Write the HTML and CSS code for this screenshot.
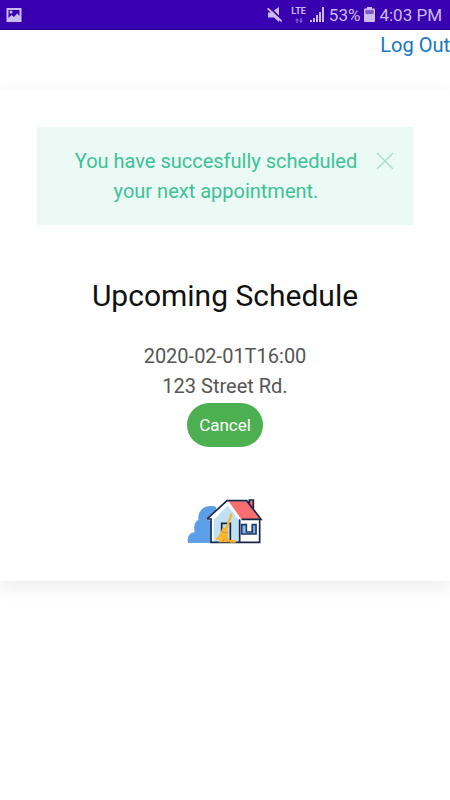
FILE: index.html
```html
<!DOCTYPE html>
<html lang="en">
<head>
<meta charset="utf-8">
<meta name="viewport" content="width=device-width, initial-scale=1">
<title>Upcoming Schedule</title>
<link rel="stylesheet" href="styles.css">
</head>
<body>
<header class="status">
  <svg class="status-photo" width="16" height="16" viewBox="0 0 16 16" aria-hidden="true">
    <path fill="currentColor" fill-rule="evenodd" d="M1 1h14q.5 0 .5.500v13q0 .5-.5.500H1q-.5 0-.5-.5v-13Q.5 1 1 1zM2.500 3v8l3-3 2.500 2 3.200-3.500L13.500 9V3z"/>
    <circle cx="5" cy="5" r="1.500" fill="currentColor"/>
  </svg>
  <div class="status-info">
    <svg width="16" height="16" viewBox="0 0 16 16" aria-hidden="true">
      <path fill="currentColor" d="M1 5.500h3l1.500-1.200L12 11v4l-5-4.500H1zM7 3.500 12 0v8.500zM1.300.7 15.300 13.700l-1.200 1.300L0 2z"/>
    </svg>
    <span class="network">
      <span class="lte">LTE</span>
      <svg class="arrows" width="8" height="5" viewBox="0 0 8 5" aria-hidden="true"><path fill="currentColor" d="M1.500 5V2.500H0L2 0l2 2.500H2.800V5zM5.300 0v2.500H4L6 5l2-2.500H6.700V0z"/></svg>
    </span>
    <svg class="signal" width="15" height="15" viewBox="0 0 15 15" aria-hidden="true">
      <path fill="currentColor" d="M0 13h2v2H0zM3 11h2v4H3zM6 8h2v7H6zM9 5h2v10H9zM12 0h2v15h-2z"/>
    </svg>
    <span class="percent">53%</span>
    <svg class="battery" width="11" height="15" viewBox="0 0 11 15" aria-hidden="true">
      <path fill="currentColor" d="M3 0h5v1.500h2q1 0 1 1V14q0 1-1 1H1q-1 0-1-1V2.500q0-1 1-1h2z"/>
      <path fill="#7b57cc" d="M1.500 3h8v4h-8z"/>
    </svg>
    <span class="time">4:03 PM</span>
  </div>
</header>
<nav class="topnav"><a href="#">Log Out</a></nav>
<main class="card">
  <div class="alert" role="alert">
    <p>You have succesfully scheduled your next appointment.</p>
    <button class="close" type="button" aria-label="Close">
      <svg width="18" height="18" viewBox="0 0 18 18" fill="none" stroke="currentColor" stroke-width="1.400" aria-hidden="true"><path d="M1 1l16 16M17 1 1 17"/></svg>
    </button>
  </div>
  <h1>Upcoming Schedule</h1>
  <div class="appointment">
    <p>2020-02-01T16:00</p>
    <p>123 Street Rd.</p>
    <button class="cancel" type="button">Cancel</button>
  </div>
  <svg class="logo" width="76" height="46" viewBox="22 24 228 138" aria-hidden="true">
    <path fill="#5b9fe8" d="M25 158c-3-18 8-30 25-29-6-20 4-36 20-37l-14-6c-2-22 16-44 51-36l6 14-19 30v64z"/>
    <path fill="#5b9fe8" d="M25 158c-3-18 6-31 20-31-4-20 2-34 12-38 0-12 8-17 18-16 2-18 16-27 34-22l-5 107z"/>
    <path fill="#fff" d="M80 88 92 92v66h148V90l8-4-34-56h-72z"/>
    <path fill="#bfdff3" d="m144 42-42 47v67h76V88z"/>
    <path fill="#f96f6f" d="M147 34h53l42 54h-57z"/>
    <path fill="#f96f6f" d="M210 32h10v29l-10-12z"/>
    <g fill="none" stroke="#182448" stroke-width="5">
      <path d="m82 87 60-55h59l43 56h-58M82 87h12v70h86V88M240 90v67h-59M209 40V30h12v30"/>
      <path d="M126 124v-24h26v52"/>
    </g>
    <path fill="none" stroke="#fff" stroke-width="4" d="M99 152V90l45-46 34 44"/>
    <path fill="#8cbae8" d="M186 104h12v24h18v-24h12v28h-42z"/>
    <path fill="none" stroke="#1c3769" stroke-width="5" d="M186 104v28h43v-28h-11v22h-18v-22z"/>
    <g fill="#fbb52f">
      <path d="m153 70 6 2-15 44-7-2z"/>
      <path d="M127 116q8-8 17 0l2 10-21-2z"/>
      <path d="M123 124l23 4q-4 14 6 29h-36q3-5 3-11l-10 6q2-5-1-6 12-7 15-22z"/>
      <path d="M151 150h18v8h-18z"/>
    </g>
    <path fill="none" stroke="#c98520" stroke-width="2" d="m124 125 21 3M130 155l4-10M143 156l-3-8"/>
  </svg>
</main>
</body>
</html>
```
FILE: styles.css
```css
* { box-sizing: border-box; }

body {
  margin: 0;
  min-height: 100vh;
  background: #fff;
  color: #555;
  font-family: Roboto, "Liberation Sans", sans-serif;
  font-size: 20px;
  line-height: 30px;
}

h1, p { margin: 0; }

button {
  border: 0;
  font-family: inherit;
  cursor: pointer;
}

svg { display: block; flex: none; }

.status {
  display: flex;
  align-items: center;
  justify-content: space-between;
  height: 30px;
  padding: 0 8px 0 6px;
  border-bottom: 1px solid #2a0090;
  background: #3900b1;
  color: #cbbcf0;
  font-size: 17px;
}

.status-info {
  display: flex;
  align-items: center;
  gap: 4px;
}

.network {
  display: flex;
  flex-direction: column;
  align-items: center;
  gap: 2px;
  margin-left: 4px;
}

.lte {
  font-size: 9px;
  font-weight: 700;
  line-height: 9px;
}

.arrows { color: #8361d2; }

.topnav {
  display: flex;
  justify-content: flex-end;
}

.topnav a {
  color: #1577c6;
  text-decoration: none;
}

.card {
  display: flex;
  flex-direction: column;
  align-items: center;
  margin-top: 30px;
  padding: 37px;
  background: #fff;
  box-shadow: 0 6px 19px rgba(0, 0, 0, 0.08);
  text-align: center;
}

.alert {
  position: relative;
  align-self: stretch;
  padding: 19px;
  padding-right: 37px;
  background: #ebfaf5;
  color: #3dc295;
}

.close {
  position: absolute;
  top: 25px;
  right: 19px;
  padding: 0;
  background: none;
  color: #a7e0cc;
}

h1 {
  margin-top: 51px;
  color: #111;
  font-size: 30px;
  font-weight: 400;
  line-height: 40px;
}

.appointment { margin-top: 25px; }

.cancel {
  display: block;
  margin: 2px auto 0;
  padding: 12px;
  border-radius: 22px;
  background: #4caf50;
  color: #fff;
  font-size: 17px;
  line-height: 20px;
}

.logo { margin-top: 51px; }
```
